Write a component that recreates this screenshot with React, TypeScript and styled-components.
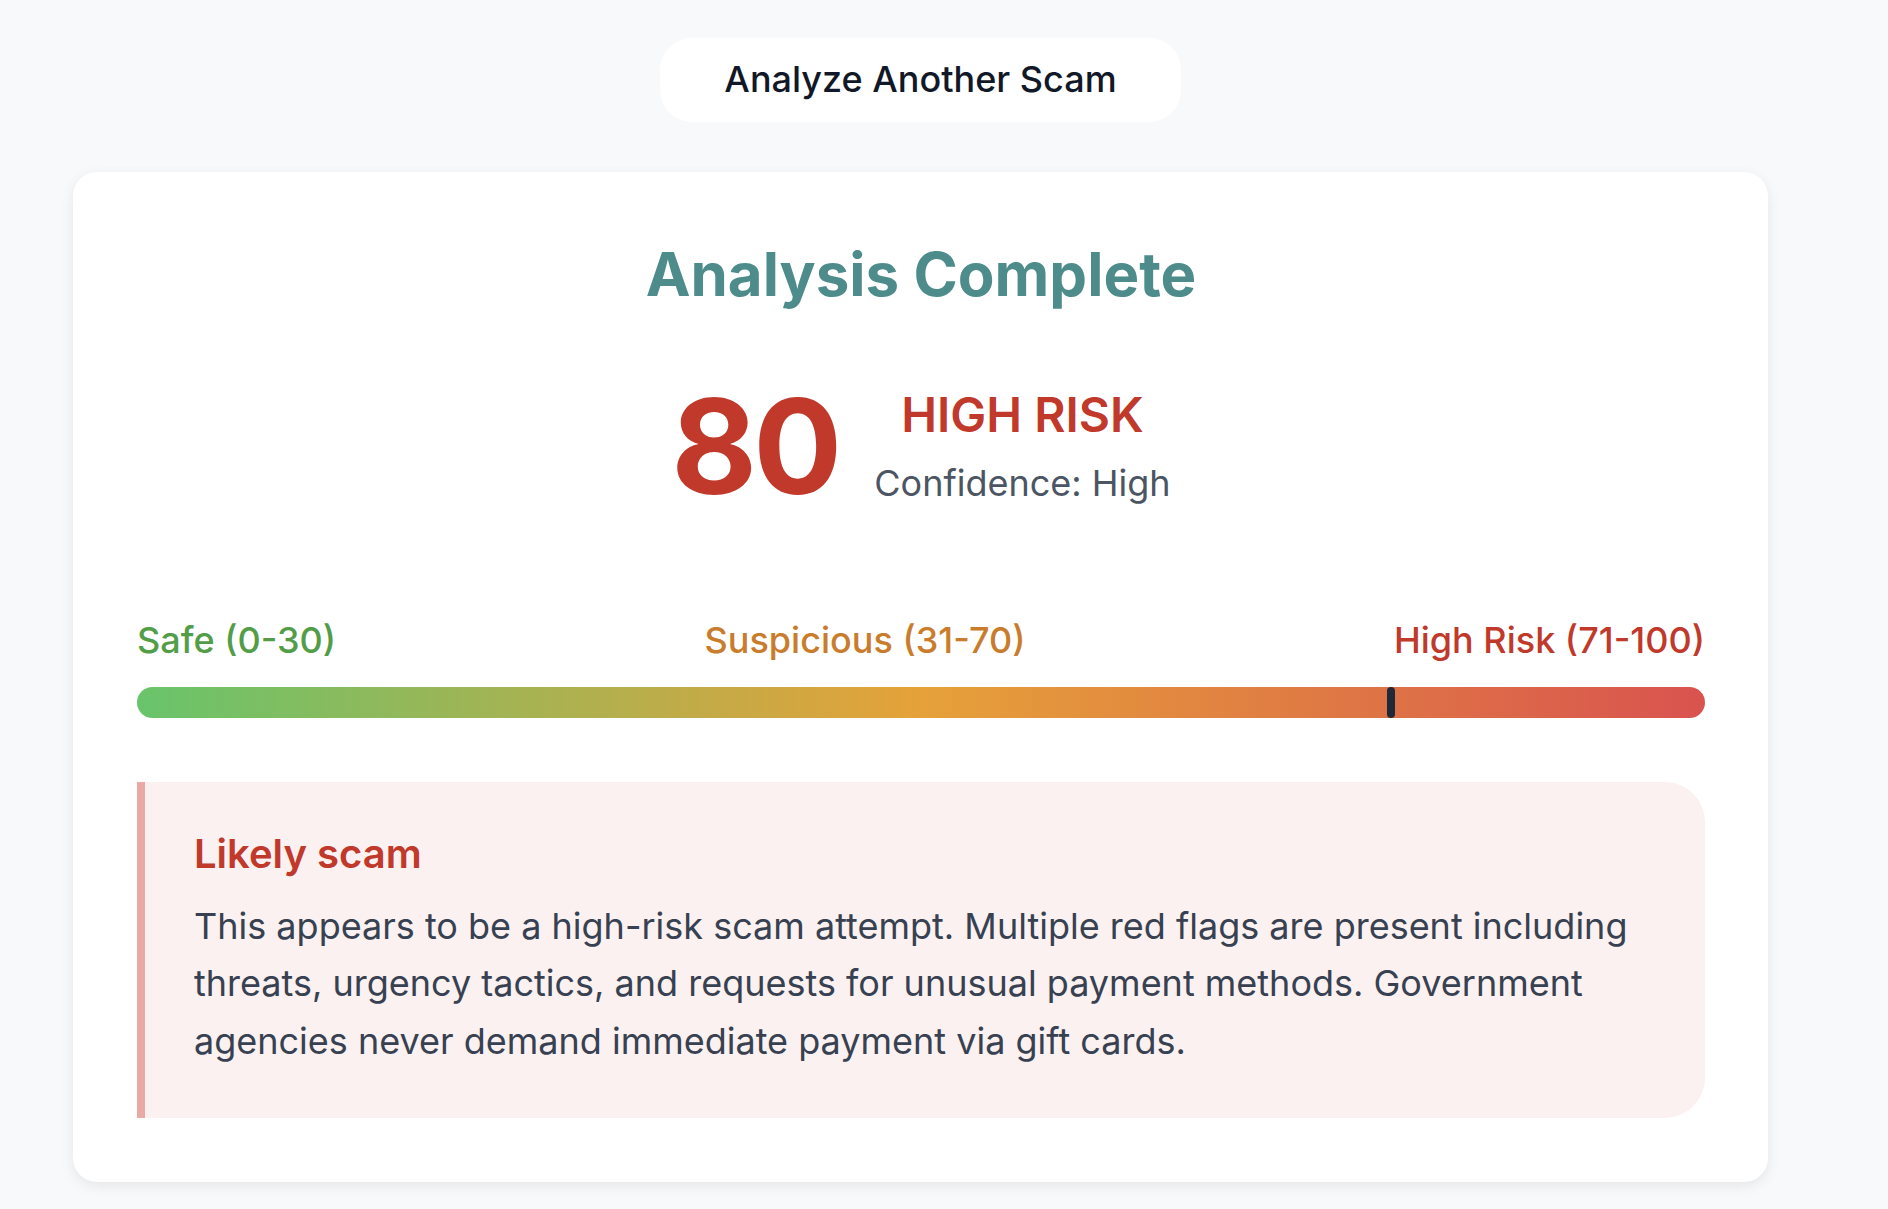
import React from "react";
import styled, { createGlobalStyle } from "styled-components";

const GlobalStyle = createGlobalStyle`
  html, body {
    margin: 0;
    padding: 0;
    background: #f8f9fa;
    font-family: Inter, "Noto Sans", "Liberation Sans", sans-serif;
  }
  * { box-sizing: border-box; }
`;

const Page = styled.main`
  min-height: 1209px;
  padding: 38px 120px 0 73px;
  display: flex;
  flex-direction: column;
  align-items: center;
  gap: 50px;
`;

const ActionButton = styled.button`
  font-family: inherit;
  font-size: 36px;
  font-weight: 500;
  line-height: 1.21;
  color: #111827;
  background: #ffffff;
  border: none;
  border-radius: 32px;
  padding: 20px 64px;
  cursor: pointer;
`;

const Card = styled.section`
  width: 100%;
  background: #ffffff;
  border-radius: 24px;
  box-shadow: 0 4px 14px rgba(0, 0, 0, 0.08);
  padding: 66px 63px 64px 64px;
  display: flex;
  flex-direction: column;
`;

const Title = styled.h1`
  margin: 0;
  text-align: center;
  font-size: 60px;
  font-weight: 700;
  line-height: 1.21;
  color: #4e8c8c;
`;

const ScoreRow = styled.div`
  display: flex;
  align-items: center;
  justify-content: center;
  gap: 36px;
  margin-top: 70px;
`;

const ScoreNumber = styled.div`
  font-size: 132px;
  font-weight: 700;
  line-height: 1;
  color: #c0392b;
  letter-spacing: -4px;
`;

const ScoreMeta = styled.div`
  display: flex;
  flex-direction: column;
  align-items: center;
  gap: 18px;
`;

const RiskLevel = styled.div`
  font-size: 48px;
  font-weight: 600;
  line-height: 1.21;
  color: #c0392b;
`;

const Confidence = styled.div`
  font-size: 36px;
  font-weight: 400;
  line-height: 1.21;
  color: #4b5563;
`;

const Scale = styled.div`
  display: flex;
  flex-direction: column;
  gap: 24px;
  margin-top: 107px;
`;

const ScaleLabels = styled.div`
  display: flex;
  justify-content: space-between;
`;

const ScaleLabel = styled.span<{ $color: string }>`
  font-size: 36px;
  font-weight: 500;
  line-height: 1.21;
  color: ${(p) => p.$color};
`;

const Bar = styled.div`
  position: relative;
  height: 31px;
  border-radius: 16px;
  background: linear-gradient(to right, #68c46b 0%, #e6a139 50%, #d9534f 100%);
`;

const Marker = styled.div`
  position: absolute;
  top: 0;
  bottom: 0;
  width: 8px;
  margin-left: -4px;
  border-radius: 4px;
  background: #1f2937;
`;

const Verdict = styled.div`
  margin-top: 64px;
  background: #fbf1f0;
  border-left: 8px solid #eba9a6;
  border-radius: 0 40px 40px 0;
  padding: 48px 48px 48px 49px;
`;

const VerdictTitle = styled.h2`
  margin: 0 0 20px;
  font-size: 40px;
  font-weight: 600;
  line-height: 1.2;
  color: #c0392b;
`;

const VerdictText = styled.p`
  margin: 0;
  font-size: 36px;
  font-weight: 400;
  line-height: 1.6;
  color: #374151;
`;

export default function App() {
  const score = 80;
  return (
    <>
      <GlobalStyle />
      <Page>
        <ActionButton>Analyze Another Scam</ActionButton>
        <Card>
          <Title>Analysis Complete</Title>
          <ScoreRow>
            <ScoreNumber>{score}</ScoreNumber>
            <ScoreMeta>
              <RiskLevel>HIGH RISK</RiskLevel>
              <Confidence>Confidence: High</Confidence>
            </ScoreMeta>
          </ScoreRow>
          <Scale>
            <ScaleLabels>
              <ScaleLabel $color="#529d47">Safe (0-30)</ScaleLabel>
              <ScaleLabel $color="#c97d2c">Suspicious (31-70)</ScaleLabel>
              <ScaleLabel $color="#c0392b">High Risk (71-100)</ScaleLabel>
            </ScaleLabels>
            <Bar>
              <Marker style={{ left: `${score}%` }} />
            </Bar>
          </Scale>
          <Verdict>
            <VerdictTitle>Likely scam</VerdictTitle>
            <VerdictText>
              This appears to be a high-risk scam attempt. Multiple red flags are present including
              threats, urgency tactics, and requests for unusual payment methods. Government agencies
              never demand immediate payment via gift cards.
            </VerdictText>
          </Verdict>
        </Card>
      </Page>
    </>
  );
}
